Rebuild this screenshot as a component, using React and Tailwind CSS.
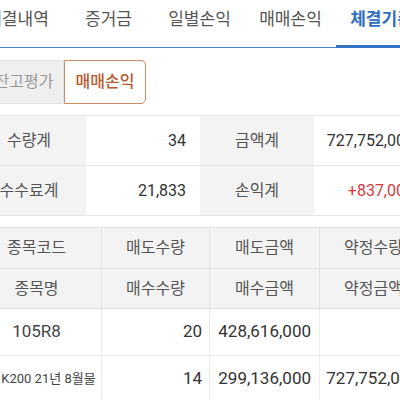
const tabs = ["체결내역", "증거금", "일별손익", "매매손익", "체결기준"];

const font = { fontFamily: "Roboto, 'Noto Sans CJK KR', sans-serif" };

const SummaryRow = ({ label1, value1, label2, value2, red }) => {
  return (
    <div className="grid grid-cols-4 h-[50px] border-b border-[#e6e6e6]">
      <div className="flex items-center justify-center bg-[#f3f3f3] text-[16px] text-[#555]">
        {label1}
      </div>
      <div className="flex items-center justify-end pr-[14px] text-[16px] text-[#333]">
        {value1}
      </div>
      <div className="flex items-center justify-center bg-[#f3f3f3] text-[16px] text-[#555]">
        {label2}
      </div>
      <div
        className={
          red
            ? "flex items-center justify-end pr-[14px] text-[16px] text-[#d43a3a]"
            : "flex items-center justify-end pr-[14px] text-[16px] text-[#333]"
        }
      >
        {value2}
      </div>
    </div>
  );
};

const HeadRow = ({ cells, h }) => {
  return (
    <div className={"grid grid-cols-[130px_108px_110px_108px] border-b border-[#e2e2e2] bg-[#f3f3f3] " + h}>
      {cells.map((c, i) => (
        <div
          key={i}
          className="flex items-center justify-center border-r border-[#e2e2e2] text-[16px] text-[#555]"
        >
          {c}
        </div>
      ))}
    </div>
  );
};

const DataRow = ({ name, small, qty, amt, total, h }) => {
  return (
    <div className={"grid grid-cols-[130px_108px_110px_108px] border-b border-[#ececec] " + h}>
      <div
        className={
          small
            ? "flex items-center justify-center border-r border-[#ececec] text-[13px] text-[#444] whitespace-nowrap"
            : "flex items-center justify-center border-r border-[#ececec] text-[17px] text-[#444]"
        }
      >
        {name}
      </div>
      <div className="flex items-center justify-end pr-[7px] border-r border-[#ececec] text-[17px] text-[#333]">
        {qty}
      </div>
      <div className="flex items-center justify-end pr-[8px] border-r border-[#ececec] text-[17px] text-[#333]">
        {amt}
      </div>
      <div className="flex items-center justify-end pr-[8px] border-r border-[#ececec] text-[17px] text-[#333]">
        {total}
      </div>
    </div>
  );
};

export default function App() {
  return (
    <div className="w-[400px] h-[400px] overflow-hidden bg-white" style={font}>
      <div className="w-[456px] ml-[-28px]">
        <div className="flex">
          {tabs.map((t, i) =>
            i === 4 ? (
              <div
                key={t}
                className="w-[91px] h-[48px] flex justify-center pt-[7px] border-b-[3px] border-[#3472c4] text-[17px] font-bold text-[#2f6cc0]"
              >
                {t}
              </div>
            ) : (
              <div
                key={t}
                className="w-[91px] h-[48px] flex justify-center pt-[7px] border-b-[1.5px] border-[#4a82cc] text-[17px] text-[#555]"
              >
                {t}
              </div>
            )
          )}
          <div className="flex-1 h-[48px] border-b-[1.5px] border-[#4a82cc]" />
        </div>

        <div className="flex pl-[12px] pt-[12px]">
          <div className="w-[80px] h-[44px] flex items-center justify-center bg-[#efefef] border border-[#e3e3e3] rounded-l-[5px] text-[16px] text-[#9a9a9a]">
            잔고평가
          </div>
          <div className="w-[82px] h-[44px] flex items-center justify-center bg-white border border-[#cc8a66] rounded-r-[5px] text-[16px] font-medium text-[#b5592f]">
            매매손익
          </div>
        </div>

        <div className="mt-[11px] border-t border-[#e6e6e6]">
          <SummaryRow label1="수량계" value1="34" label2="금액계" value2="727,752,000" />
          <SummaryRow label1="수수료계" value1="21,833" label2="손익계" value2="+837,000" red />
        </div>

        <div className="mt-[11px] border-t border-[#e2e2e2]">
          <HeadRow cells={["종목코드", "매도수량", "매도금액", "약정수량"]} h="h-[41px]" />
          <HeadRow cells={["종목명", "매수수량", "매수금액", "약정금액"]} h="h-[40px]" />
          <DataRow name="105R8" qty="20" amt="428,616,000" total="" h="h-[47px]" />
          <DataRow
            name="미니K200 21년 8월물"
            small
            qty="14"
            amt="299,136,000"
            total="727,752,000"
            h="h-[47px]"
          />
        </div>
      </div>
    </div>
  );
}
